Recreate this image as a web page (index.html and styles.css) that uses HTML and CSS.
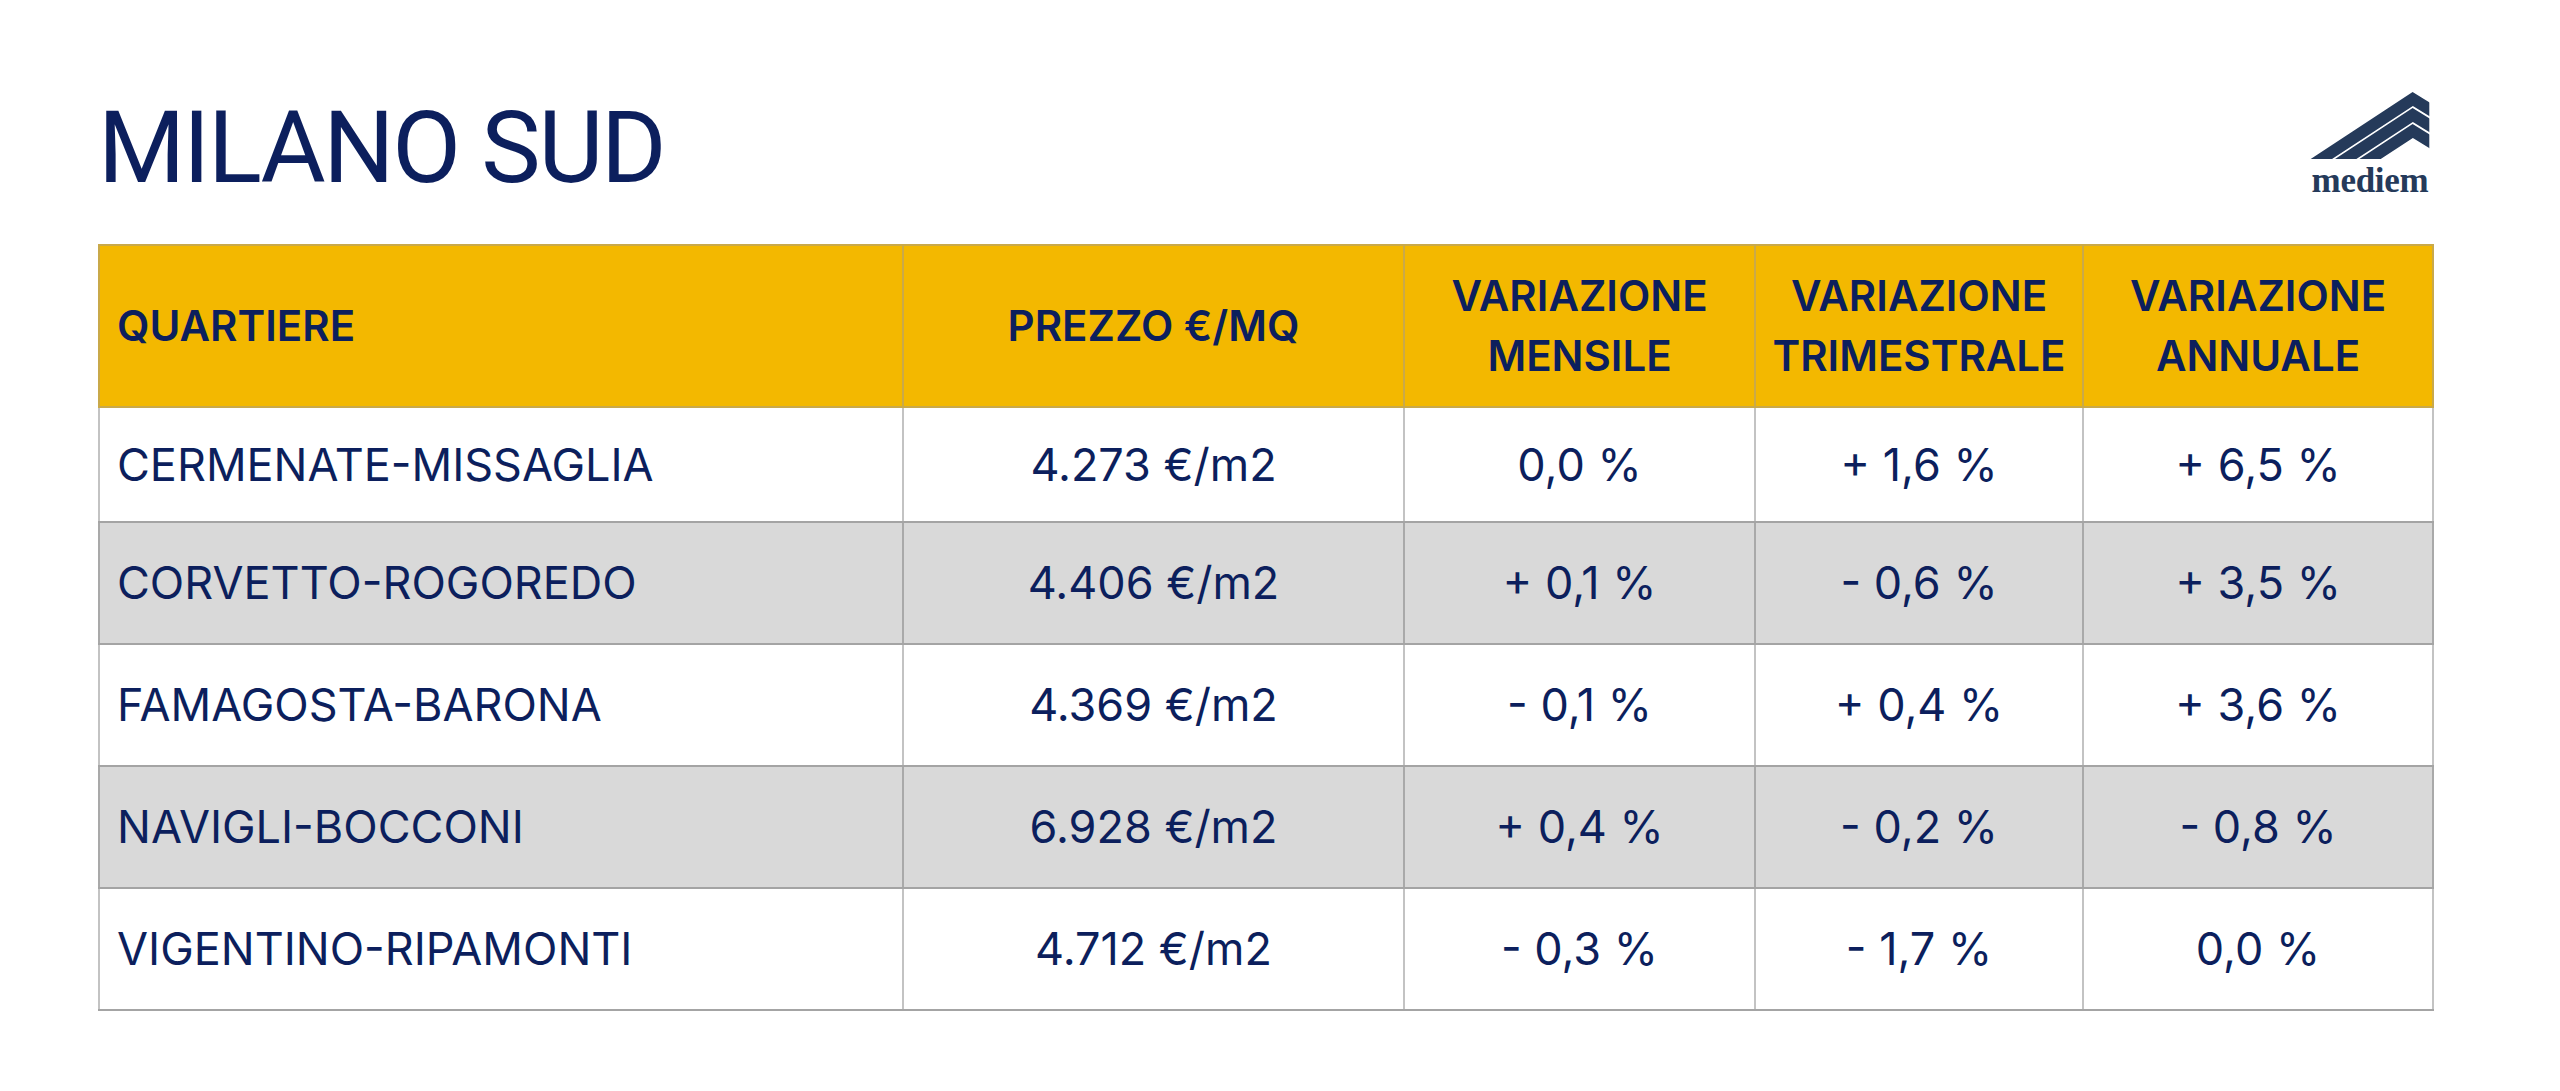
FILE: index.html
```html
<!DOCTYPE html>
<html lang="it">
<head>
<meta charset="utf-8">
<title>Milano Sud</title>
<link rel="stylesheet" href="styles.css">
</head>
<body>
<div class="page">
  <header class="top">
    <h1 class="title">MILANO SUD</h1>
    <div class="logo">
      <svg class="logo-mark" viewBox="0 0 120 67" width="120" height="67">
        <defs>
          <clipPath id="lc"><rect x="0" y="0" width="119.3" height="67"/></clipPath>
        </defs>
        <g clip-path="url(#lc)" fill="none" stroke="#253a5a" stroke-width="11.7" stroke-linejoin="miter" stroke-miterlimit="10">
          <polyline points="-50,107.3 102.7,7 170,48.7"/>
          <polyline points="-50,123.3 102.7,23 170,64.7"/>
          <polyline points="-50,139.3 102.7,39 170,80.7"/>
        </g>
      </svg>
      <div class="logo-text">mediem</div>
    </div>
  </header>
  <table class="prices">
    <colgroup>
      <col class="c1"><col class="c2"><col class="c3"><col class="c4"><col class="c5">
    </colgroup>
    <thead>
      <tr>
        <th class="left">QUARTIERE</th>
        <th>PREZZO €/MQ</th>
        <th>VARIAZIONE<br>MENSILE</th>
        <th>VARIAZIONE<br>TRIMESTRALE</th>
        <th>VARIAZIONE<br>ANNUALE</th>
      </tr>
    </thead>
    <tbody>
      <tr class="first">
        <td class="left">CERMENATE-MISSAGLIA</td><td>4.273 €/m2</td><td>0,0 %</td><td>+ 1,6 %</td><td>+ 6,5 %</td>
      </tr>
      <tr class="alt">
        <td class="left">CORVETTO-ROGOREDO</td><td>4.406 €/m2</td><td>+ 0,1 %</td><td>- 0,6 %</td><td>+ 3,5 %</td>
      </tr>
      <tr>
        <td class="left">FAMAGOSTA-BARONA</td><td>4.369 €/m2</td><td>- 0,1 %</td><td>+ 0,4 %</td><td>+ 3,6 %</td>
      </tr>
      <tr class="alt">
        <td class="left">NAVIGLI-BOCCONI</td><td>6.928 €/m2</td><td>+ 0,4 %</td><td>- 0,2 %</td><td>- 0,8 %</td>
      </tr>
      <tr>
        <td class="left">VIGENTINO-RIPAMONTI</td><td>4.712 €/m2</td><td>- 0,3 %</td><td>- 1,7 %</td><td>0,0 %</td>
      </tr>
    </tbody>
  </table>
</div>
</body>
</html>
```

FILE: styles.css
```css
* { box-sizing: border-box; }
html, body { margin: 0; padding: 0; background: #ffffff; }
body { font-family: Inter, Roboto, "Liberation Sans", sans-serif; color: #0c1f5d; }

.page {
  width: 2560px;
  padding: 92px 128px 0 98px;
}

.top {
  display: flex;
  justify-content: space-between;
  align-items: flex-start;
  height: 152px;
}

.title {
  margin: 6px 0 0 0;
  font-family: Roboto, "Liberation Sans", sans-serif;
  font-size: 100px;
  line-height: 100px;
  font-weight: 400;
  letter-spacing: -2.3px;
  color: #0c1f5d;
}

.logo {
  width: 120px;
  margin-right: 2px;
}
.logo-mark { display: block; }
.logo-text {
  margin-top: 4px;
  font-family: "Liberation Serif", "DejaVu Serif", serif;
  font-weight: 700;
  font-size: 35px;
  line-height: 35px;
  color: #253a5a;
  text-align: center;
  letter-spacing: -0.3px;
}

.prices {
  width: 2334px;
  table-layout: fixed;
  border-collapse: collapse;
}
.c1 { width: 804px; }
.c2 { width: 501px; }
.c3 { width: 351px; }
.c4 { width: 328px; }
.c5 { width: 350px; }

.prices th, .prices td {
  border-left: 2px solid #c3c3c3;
  border-right: 2px solid #c3c3c3;
  border-top: 2px solid #a4a4a4;
  border-bottom: 2px solid #a4a4a4;
  padding: 0 6px;
  text-align: center;
  vertical-align: middle;
  white-space: nowrap;
}

.prices thead tr { height: 162px; }
.prices th {
  background: #f3b800;
  font-weight: 600;
  font-size: 42px;
  line-height: 60px;
  border-color: #c9a94a;
}

.prices td {
  font-size: 45px;
  line-height: 54px;
  font-weight: 400;
}
.prices tbody tr { height: 122px; }
.prices tbody tr.first { height: 115px; }
.prices tbody tr.alt td { background: #d9d9d9; border-left-color: #a9a9a9; border-right-color: #a9a9a9; }

.prices .left { text-align: left; padding-left: 17px; }
```
